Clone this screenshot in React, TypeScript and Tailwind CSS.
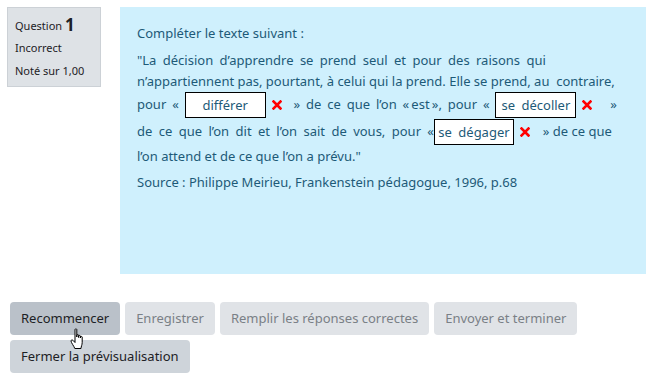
import React from "react";

const font = { fontFamily: '"Noto Sans", "Open Sans", sans-serif' };

function Cross() {
  return (
    <svg width="10" height="10" viewBox="0 0 10 10" className="inline-block align-middle mx-[6px]">
      <path d="M1.5 1.5 L8.5 8.5 M8.5 1.5 L1.5 8.5" stroke="#f00" strokeWidth="2.6" strokeLinecap="square" />
    </svg>
  );
}

function Blank({ value, w }: { value: string; w: string }) {
  return (
    <span
      className={`inline-block ${w} h-[26px] leading-[24px] border border-black bg-white text-center align-middle text-[13px] text-[#1d5a78]`}
      style={{ wordSpacing: "3px" }}
    >
      {value}
    </span>
  );
}

function HandCursor() {
  return (
    <svg width="18" height="22" viewBox="0 0 18 22" className="absolute left-[70px] top-[328px]">
      <path
        d="M5 1.5 C5 0.7 6.8 0.7 6.8 1.5 L6.8 9 L6.8 7.2 C6.8 6.4 8.6 6.4 8.6 7.2 L8.6 9.5 L8.6 8 C8.6 7.2 10.4 7.2 10.4 8 L10.4 10 L10.4 9 C10.4 8.2 12.2 8.2 12.2 9 L12.2 14.5 C12.2 17 11 18.5 11 20.5 L4.8 20.5 C4.2 18.5 1 14.5 1 13 C1 12 2.2 11.6 3 12.4 L5 14.5 Z"
        fill="#fff"
        stroke="#000"
        strokeWidth="1"
        strokeLinejoin="round"
      />
    </svg>
  );
}

export default function App() {
  return (
    <div className="relative w-[656px] h-[376px] bg-white overflow-hidden" style={font}>
      <div className="flex items-start gap-[19px] pt-[7px] pl-[7px]">
        <div className="w-[94px] h-[80px] bg-[#dee2e6] border border-[#ccd1d6] px-[7px] pt-[8px] text-[11px] text-[#1d2125]">
          <div className="leading-[18px]">
            Question <span className="text-[17px] font-bold align-[-1px]">1</span>
          </div>
          <div className="mt-[5px] leading-[16px]">Incorrect</div>
          <div className="mt-[7px] leading-[16px]">Noté sur 1,00</div>
        </div>

        <div className="w-[526px] h-[267px] bg-[#cff0fd] px-[17px] pt-[16px] text-[13px] text-[#1d5a78]">
          <div className="leading-[20px]">Compléter le texte suivant :</div>
          <div className="mt-[7px] leading-[21px]" style={{ wordSpacing: "3px" }}>
            "La décision d’apprendre se prend seul et pour des raisons qui
          </div>
          <div className="leading-[21px]">
            n’appartiennent pas, pourtant, à celui qui la prend. Elle se prend, au&nbsp; contraire,
          </div>
          <div className="h-[27px] -mt-[1px] flex items-center whitespace-pre" style={{ wordSpacing: "2.5px" }}>
            <span>pour « </span>
            <Blank value="différer" w="w-[81px]" />
            <Cross />
            <span>&nbsp;» de ce que l’on «{"\u202F"}est{"\u202F"}», pour « </span>
            <Blank value="se décoller" w="w-[81px]" />
            <Cross />
            <span>&nbsp; »</span>
          </div>
          <div className="h-[27px] flex items-center whitespace-pre" style={{ wordSpacing: "3px" }}>
            <span>de ce que l’on dit et l’on sait de vous, pour «</span>
            <Blank value="se dégager" w="w-[80px]" />
            <Cross />
            <span style={{ wordSpacing: "0px" }}>&nbsp; » de ce que</span>
          </div>
          <div className="leading-[21px] mt-[1px]">l’on attend et de ce que l’on a prévu."</div>
          <div className="leading-[21px] mt-[5px]">Source : Philippe Meirieu, Frankenstein pédagogue, 1996, p.68</div>
        </div>
      </div>

      <div className="flex flex-wrap gap-x-[5px] gap-y-[5px] pl-[10px] pt-[28px] w-[600px] text-[13px]">
        <button className="h-[33px] px-[11px] rounded-[4px] bg-[#bac1c9] text-[#1d2125]">Recommencer</button>
        <button className="h-[33px] px-[11px] rounded-[4px] bg-[#e0e3e7] text-[#7a8086]">Enregistrer</button>
        <button className="h-[33px] px-[11px] rounded-[4px] bg-[#e0e3e7] text-[#7a8086]">Remplir les réponses correctes</button>
        <button className="h-[33px] px-[11px] rounded-[4px] bg-[#e0e3e7] text-[#7a8086]">Envoyer et terminer</button>
        <button className="h-[33px] px-[11px] rounded-[4px] bg-[#ced4da] text-[#1d2125]">Fermer la prévisualisation</button>
      </div>

      <HandCursor />
    </div>
  );
}
